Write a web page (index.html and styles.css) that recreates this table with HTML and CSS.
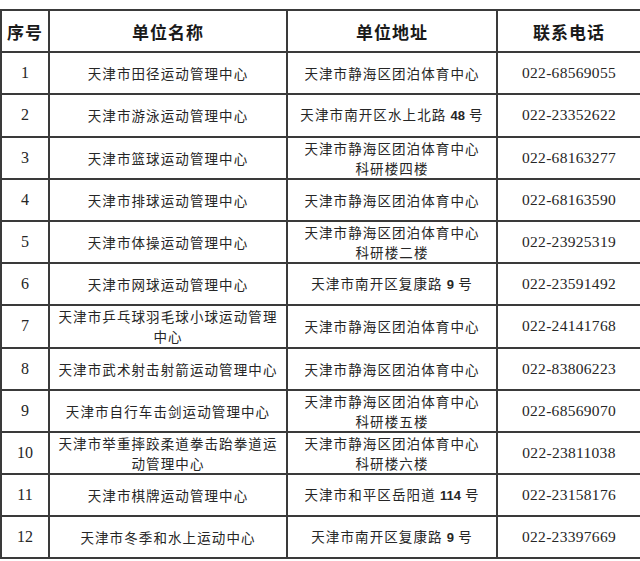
FILE: index.html
```html
<!DOCTYPE html>
<html lang="zh-CN">
<head>
<meta charset="utf-8">
<title>单位联系方式</title>
<link rel="stylesheet" href="styles.css">
</head>
<body>
<table class="tbl">
  <colgroup>
    <col class="c-no"><col class="c-name"><col class="c-addr"><col class="c-tel">
  </colgroup>
  <thead>
    <tr><th>序号</th><th>单位名称</th><th>单位地址</th><th>联系电话</th></tr>
  </thead>
  <tbody>
    <tr><td class="num">1</td><td>天津市田径运动管理中心</td><td>天津市静海区团泊体育中心</td><td class="tel">022-68569055</td></tr>
    <tr><td class="num">2</td><td>天津市游泳运动管理中心</td><td>天津市南开区水上北路 <b class="n">48</b> 号</td><td class="tel">022-23352622</td></tr>
    <tr><td class="num">3</td><td>天津市篮球运动管理中心</td><td>天津市静海区团泊体育中心<br>科研楼四楼</td><td class="tel">022-68163277</td></tr>
    <tr><td class="num">4</td><td>天津市排球运动管理中心</td><td>天津市静海区团泊体育中心</td><td class="tel">022-68163590</td></tr>
    <tr><td class="num">5</td><td>天津市体操运动管理中心</td><td>天津市静海区团泊体育中心<br>科研楼二楼</td><td class="tel">022-23925319</td></tr>
    <tr><td class="num">6</td><td>天津市网球运动管理中心</td><td>天津市南开区复康路 <b class="n">9</b> 号</td><td class="tel">022-23591492</td></tr>
    <tr><td class="num">7</td><td>天津市乒乓球羽毛球小球运动管理<br>中心</td><td>天津市静海区团泊体育中心</td><td class="tel">022-24141768</td></tr>
    <tr><td class="num">8</td><td>天津市武术射击射箭运动管理中心</td><td>天津市静海区团泊体育中心</td><td class="tel">022-83806223</td></tr>
    <tr><td class="num">9</td><td>天津市自行车击剑运动管理中心</td><td>天津市静海区团泊体育中心<br>科研楼五楼</td><td class="tel">022-68569070</td></tr>
    <tr><td class="num">10</td><td>天津市举重摔跤柔道拳击跆拳道运<br>动管理中心</td><td>天津市静海区团泊体育中心<br>科研楼六楼</td><td class="tel">022-23811038</td></tr>
    <tr><td class="num">11</td><td>天津市棋牌运动管理中心</td><td>天津市和平区岳阳道 <b class="n">114</b> 号</td><td class="tel">022-23158176</td></tr>
    <tr><td class="num">12</td><td>天津市冬季和水上运动中心</td><td>天津市南开区复康路 <b class="n">9</b> 号</td><td class="tel">022-23397669</td></tr>
  </tbody>
</table>
</body>
</html>
```

FILE: styles.css
```css
html, body {
  margin: 0;
  padding: 0;
  background: #ffffff;
}
body {
  padding-top: 9px;
  font-family: "Noto Sans CJK SC", "Noto Sans", sans-serif;
  color: #222;
}
.tbl {
  width: 640px;
  border-collapse: collapse;
  table-layout: fixed;
}
.c-no { width: 48px; }
.c-name { width: 238px; }
.c-addr { width: 210px; }
.c-tel { width: 144px; }

.tbl tr {
  height: 42.2px;
}
.tbl th, .tbl td {
  border: 2px solid #3a3a3a;
  text-align: center;
  vertical-align: middle;
  padding: 0 2px;
}
.tbl th {
  font-size: 17px;
  font-weight: 700;
  letter-spacing: 1px;
  color: #1a1a1a;
}
.tbl td {
  font-size: 13.5px;
  line-height: 20px;
  letter-spacing: 1.1px;
  color: #262626;
}
.tbl td.num {
  font-family: "Liberation Serif", serif;
  font-size: 16px;
  letter-spacing: 0;
}
.tbl td.tel {
  font-family: "Liberation Serif", serif;
  font-size: 15.5px;
  letter-spacing: 0.3px;
}
.n {
  font-family: "Liberation Sans", sans-serif;
  font-weight: 700;
  font-size: 13px;
  letter-spacing: 0;
}
```
